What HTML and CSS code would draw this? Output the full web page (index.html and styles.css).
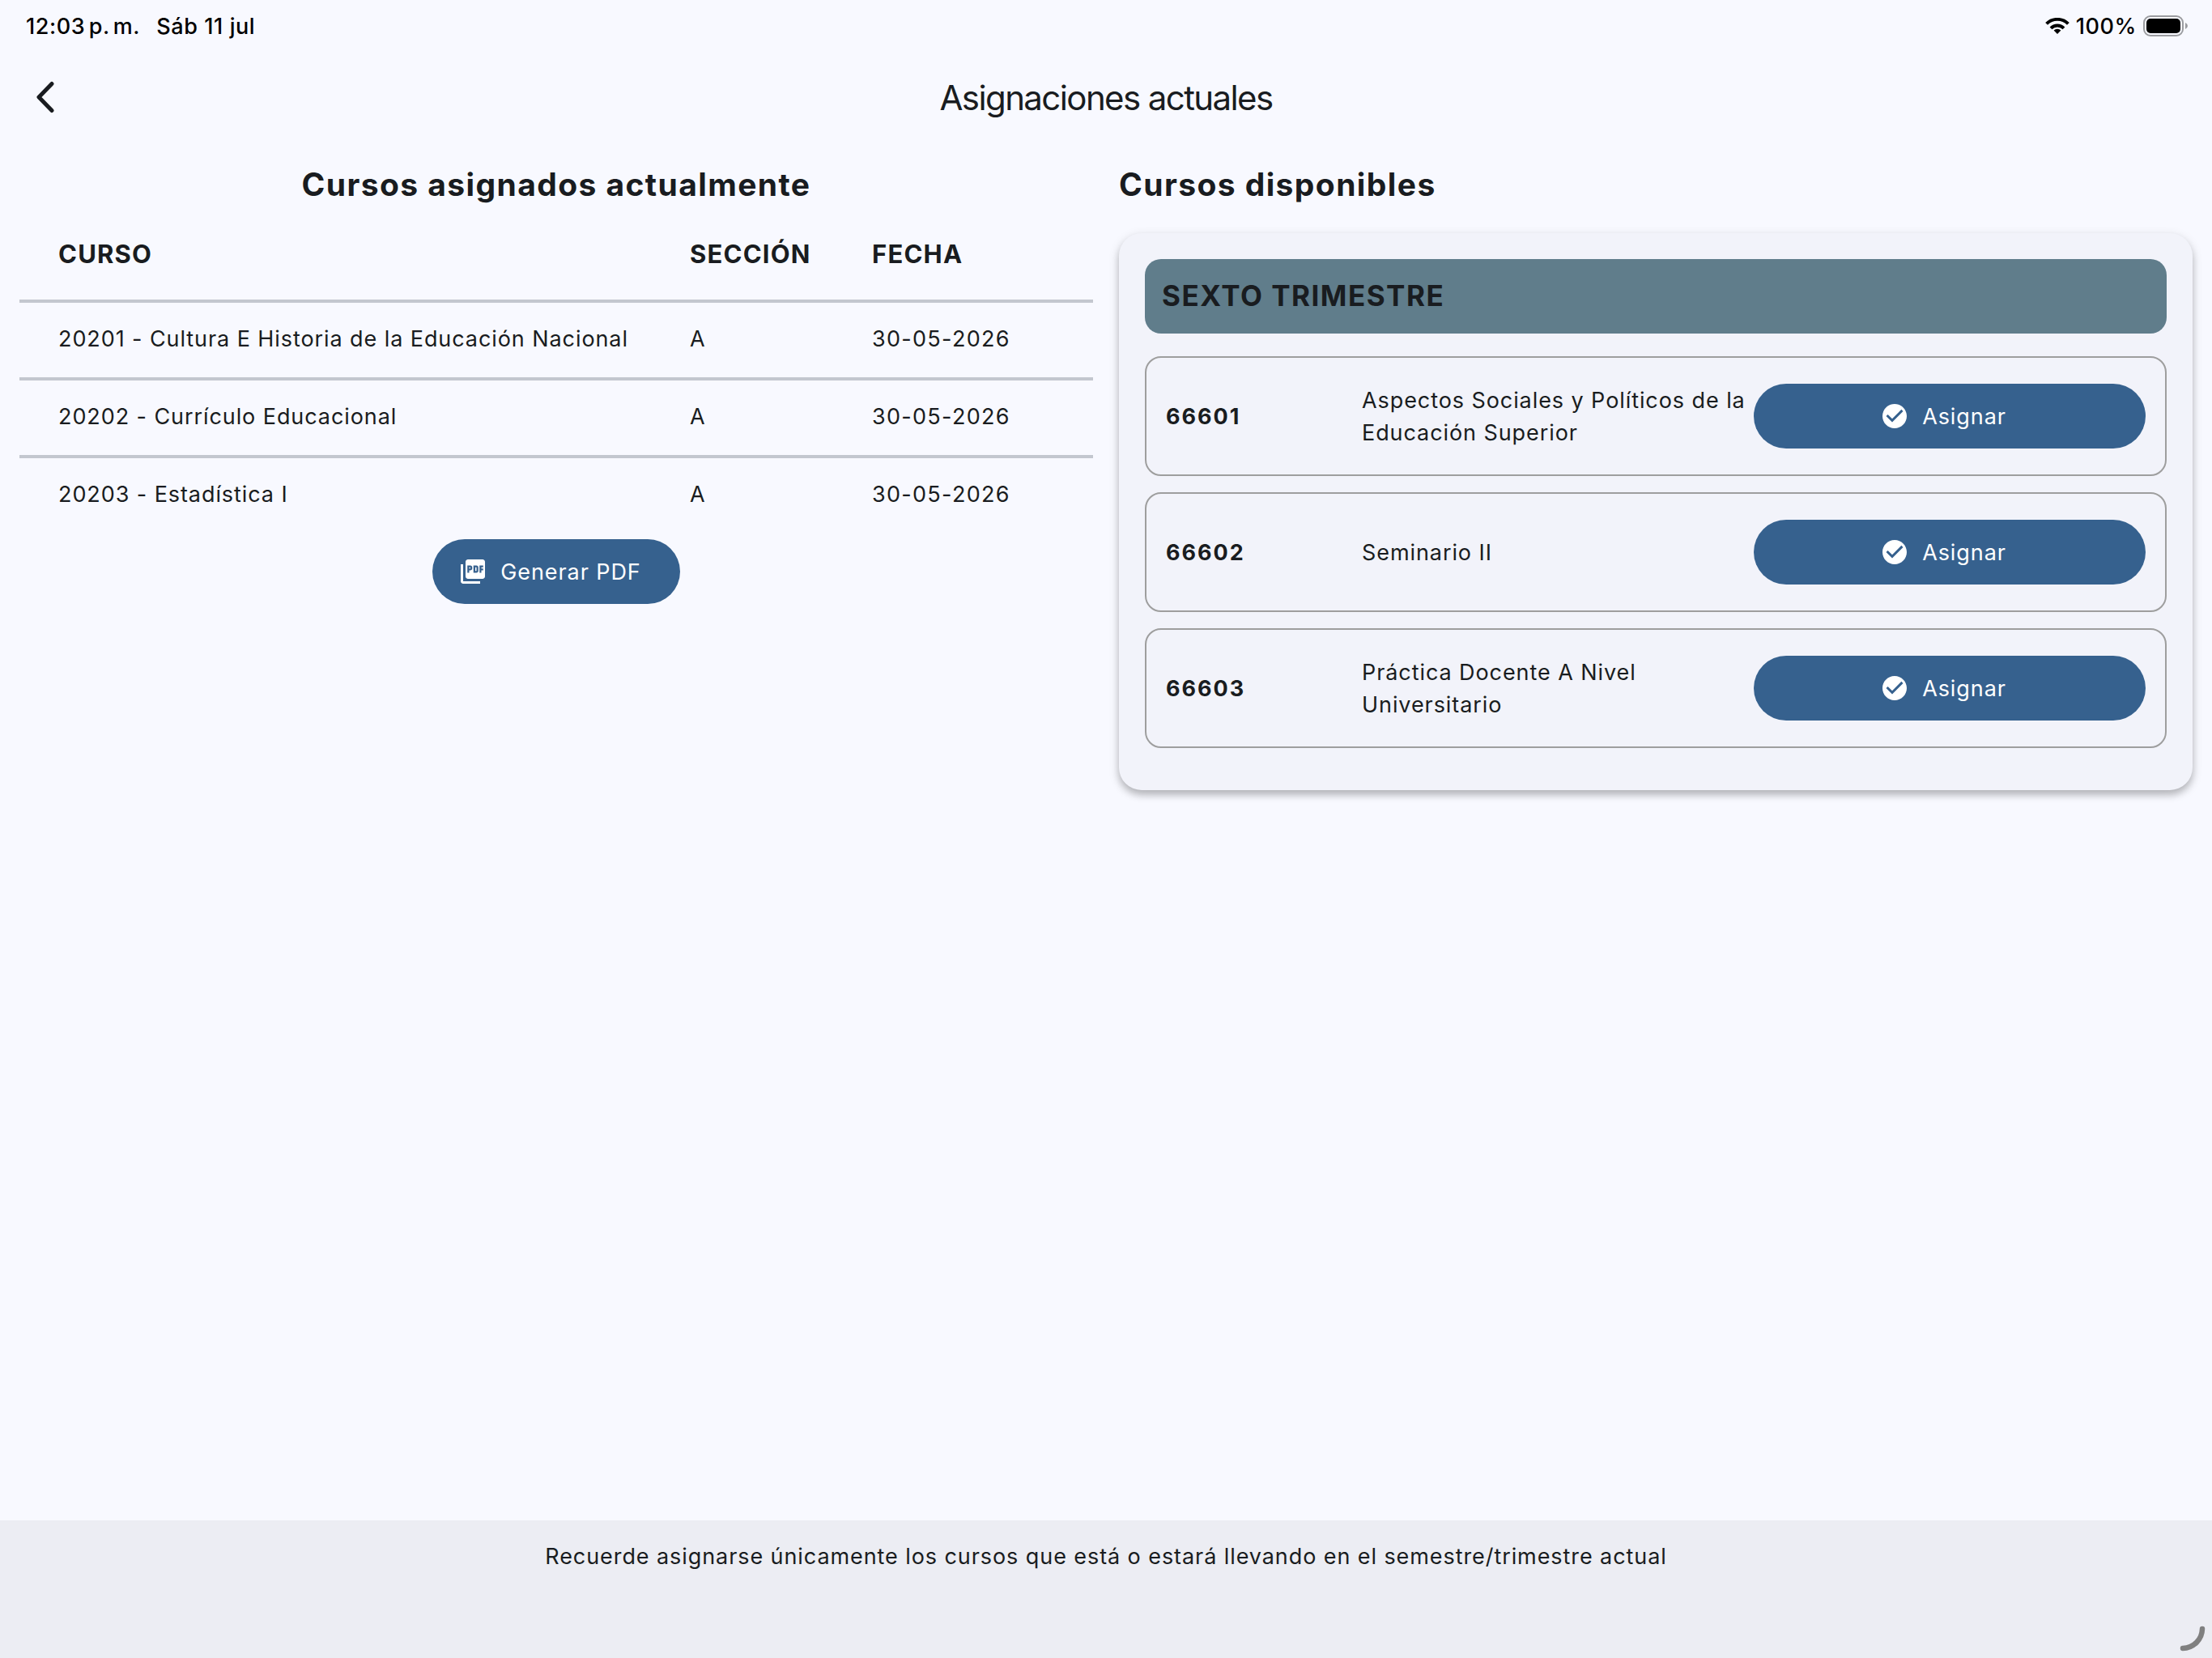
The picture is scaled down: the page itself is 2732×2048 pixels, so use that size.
FILE: index.html
```html
<!DOCTYPE html>
<html lang="es">
<head>
  <meta charset="UTF-8" />
  <meta name="viewport" content="width=device-width, initial-scale=1" />
  <title>Asignaciones actuales</title>
  <link rel="stylesheet" href="styles.css">
</head>
<body>

  <div class="status-bar">
    <span class="time">12:03 p. m.</span>
    <span class="date">Sáb 11 jul</span>
    <div class="status-right">
      <svg class="wifi" viewBox="0 0 30 20" fill="none" stroke="#000">
        <path d="M1.6 7.4 A19 19 0 0 1 28.4 7.4" stroke-width="4" />
        <path d="M7 12.8 A11.4 11.4 0 0 1 23 12.8" stroke-width="4" />
        <path d="M15 20 L10.6 15.6 A6.4 6.4 0 0 1 19.4 15.6 Z" fill="#000" stroke="none" />
      </svg>
      <span class="percent">100%</span>
      <svg class="battery" viewBox="0 0 56 26">
        <rect x="1" y="1" width="48" height="24" rx="8" fill="none" stroke="#9b9ca0" stroke-width="2" />
        <rect x="4" y="4" width="42" height="18" rx="5" fill="#000" />
        <path d="M52 9 Q55 10.5 55 13 Q55 15.5 52 17 Z" fill="#9b9ca0" />
      </svg>
    </div>
  </div>

  <header class="app-bar">
    <button class="back" aria-label="Atrás">
      <svg viewBox="0 0 24 40" fill="none" stroke="#191c20" stroke-width="5" stroke-linecap="round" stroke-linejoin="round">
        <path d="M20 3.5 L4 20 L20 36.5" />
      </svg>
    </button>
    <h1>Asignaciones actuales</h1>
  </header>

  <main class="content">
    <section class="assigned">
      <h2>Cursos asignados actualmente</h2>
      <table>
        <thead>
          <tr><th class="col-course">CURSO</th><th class="col-section">SECCIÓN</th><th>FECHA</th></tr>
        </thead>
        <tbody>
          <tr><td>20201 - Cultura E Historia de la Educación Nacional</td><td>A</td><td class="fecha">30-05-2026</td></tr>
          <tr><td>20202 - Currículo Educacional</td><td>A</td><td class="fecha">30-05-2026</td></tr>
          <tr><td>20203 - Estadística I</td><td>A</td><td class="fecha">30-05-2026</td></tr>
        </tbody>
      </table>
      <button class="btn btn-pdf">
        <svg viewBox="0 0 24 24" fill="currentColor"><path d="M20 2H8c-1.1 0-2 .9-2 2v12c0 1.1.9 2 2 2h12c1.1 0 2-.9 2-2V4c0-1.1-.9-2-2-2zm-8.5 7.5c0 .83-.67 1.5-1.5 1.5H9v2H7.5V7H10c.83 0 1.5.67 1.5 1.5v1zm5 2c0 .83-.67 1.5-1.5 1.5h-2.5V7H15c.83 0 1.5.67 1.5 1.5v3zm4-3H19v1h1.5V11H19v2h-1.5V7h3v1.5zM9 9.5h1v-1H9v1zM4 6H2v14c0 1.1.9 2 2 2h14v-2H4V6zm10 5.5h1v-3h-1v3z" /></svg>
        <span>Generar PDF</span>
      </button>
    </section>

    <section class="available">
      <h2>Cursos disponibles</h2>
      <div class="card">
        <div class="term">SEXTO TRIMESTRE</div>
        <div class="course">
          <div class="code">66601</div>
          <div class="name">Aspectos Sociales y Políticos de la Educación Superior</div>
          <button class="btn">
            <svg viewBox="0 0 24 24" fill="currentColor"><path d="M12 2C6.48 2 2 6.48 2 12s4.48 10 10 10 10-4.48 10-10S17.52 2 12 2zm-2 15l-5-5 1.41-1.41L10 14.17l7.59-7.59L19 8l-9 9z" /></svg>
            <span>Asignar</span>
          </button>
        </div>
        <div class="course">
          <div class="code">66602</div>
          <div class="name">Seminario II</div>
          <button class="btn">
            <svg viewBox="0 0 24 24" fill="currentColor"><path d="M12 2C6.48 2 2 6.48 2 12s4.48 10 10 10 10-4.48 10-10S17.52 2 12 2zm-2 15l-5-5 1.41-1.41L10 14.17l7.59-7.59L19 8l-9 9z" /></svg>
            <span>Asignar</span>
          </button>
        </div>
        <div class="course">
          <div class="code">66603</div>
          <div class="name">Práctica Docente A Nivel Universitario</div>
          <button class="btn">
            <svg viewBox="0 0 24 24" fill="currentColor"><path d="M12 2C6.48 2 2 6.48 2 12s4.48 10 10 10 10-4.48 10-10S17.52 2 12 2zm-2 15l-5-5 1.41-1.41L10 14.17l7.59-7.59L19 8l-9 9z" /></svg>
            <span>Asignar</span>
          </button>
        </div>
      </div>
    </section>
  </main>

  <footer class="notice">
    <p>Recuerde asignarse únicamente los cursos que está o estará llevando en el semestre/trimestre actual</p>
    <svg class="corner" viewBox="0 0 36 36" fill="none" stroke="#808080" stroke-width="6.5" stroke-linecap="round">
      <path d="M28 4 A24.5 24.5 0 0 1 4 28" />
    </svg>
  </footer>

</body>
</html>
```
FILE: styles.css
```css
/* Reset & base */
* {
  box-sizing: border-box;
}
body {
  font-family: Inter, "Liberation Sans", sans-serif;
  background: #f8f9ff;
  color: #191c20;
  margin: 0;
  min-height: 100vh;
  display: flex;
  flex-direction: column;
  font-size: 27px;
  line-height: 40px;
  letter-spacing: 0.92px;
}
h1, h2, p {
  margin: 0;
}
button {
  border: none;
  font: inherit;
  letter-spacing: inherit;
  cursor: pointer;
}

/* Status bar */
.status-bar {
  display: flex;
  align-items: center;
  height: 64px;
  padding: 0 29px 0 32px;
  color: #000;
  font-weight: 500;
  letter-spacing: 0.6px;
}
.status-bar span {
  padding-top: 2px;
}
.time {
  word-spacing: -3.5px;
}
.date {
  margin-left: 20px;
}
.status-right {
  display: flex;
  align-items: center;
  margin-left: auto;
}
.wifi {
  width: 30px;
  height: 20px;
  margin-right: 8px;
}
.battery {
  width: 56px;
  height: 26px;
  margin-left: 8px;
}

/* App bar */
.app-bar {
  position: relative;
  height: 112px;
  display: flex;
  align-items: center;
  justify-content: center;
}
.back {
  position: absolute;
  left: 44px;
  top: 36px;
  width: 24px;
  height: 40px;
  padding: 0;
  background: none;
}
.back svg {
  display: block;
  width: 24px;
  height: 40px;
}
h1 {
  padding-top: 2px;
  font-size: 42px;
  font-weight: 400;
  letter-spacing: -1.6px;
}

/* Two columns */
.content {
  flex: 1;
  display: grid;
  grid-template-columns: 1fr 1fr;
  gap: 32px;
  padding: 24px 24px 0;
}
h2 {
  font-size: 39px;
  line-height: 56px;
  font-weight: 700;
  letter-spacing: 1.4px;
}
.assigned {
  text-align: center;
}

/* Assigned courses */
table {
  width: 100%;
  border-collapse: separate;
  border-spacing: 0;
  table-layout: fixed;
  text-align: left;
}
th, td {
  height: 96px;
  padding: 0 0 3px 48px;
}
th {
  height: 114px;
  padding-top: 2px;
  padding-bottom: 0;
  font-size: 31px;
  font-weight: 700;
  letter-spacing: 1.2px;
}
.col-course {
  width: 780px;
}
.col-section {
  width: 225px;
}
td {
  border-top: 4px solid #c3c7cf;
}
.fecha {
  letter-spacing: 1.3px;
}

.btn {
  display: flex;
  align-items: center;
  justify-content: center;
  gap: 16px;
  height: 80px;
  padding: 0 48px 0 32px;
  border-radius: 40px;
  background: #36618e;
  color: #fff;
}
.btn svg {
  width: 36px;
  height: 36px;
}
.btn span {
  padding-top: 2px;
}
.btn-pdf {
  width: 306px;
  margin: 8px auto 0;
}

/* Available courses */
.card {
  margin-top: 32px;
  height: 688px;
  padding: 32px;
  border-radius: 28px;
  background: #f2f3fa;
  box-shadow: 0 6px 8px rgba(0,0,0,0.18), 0 4px 14px rgba(0,0,0,0.14);
}
.term {
  height: 92px;
  margin-bottom: 28px;
  padding: 0 21px;
  border-radius: 20px;
  background: #607d8b;
  font-size: 35px;
  line-height: 90px;
  font-weight: 700;
  letter-spacing: 1.5px;
}
.course {
  display: grid;
  grid-template-columns: 1fr 2fr 2fr;
  align-items: center;
  height: 148px;
  margin-bottom: 20px;
  padding: 0 24px;
  border: 2px solid #9e9e9e;
  border-radius: 20px;
}
.code, .name {
  padding-top: 2px;
}
.code {
  font-weight: 700;
  letter-spacing: 2px;
}

/* Footer */
.notice {
  position: relative;
  height: 170px;
  padding-top: 25px;
  background: #ecedf3;
  text-align: center;
}
.corner {
  position: absolute;
  right: 4px;
  bottom: 4px;
  width: 36px;
  height: 36px;
}
```
